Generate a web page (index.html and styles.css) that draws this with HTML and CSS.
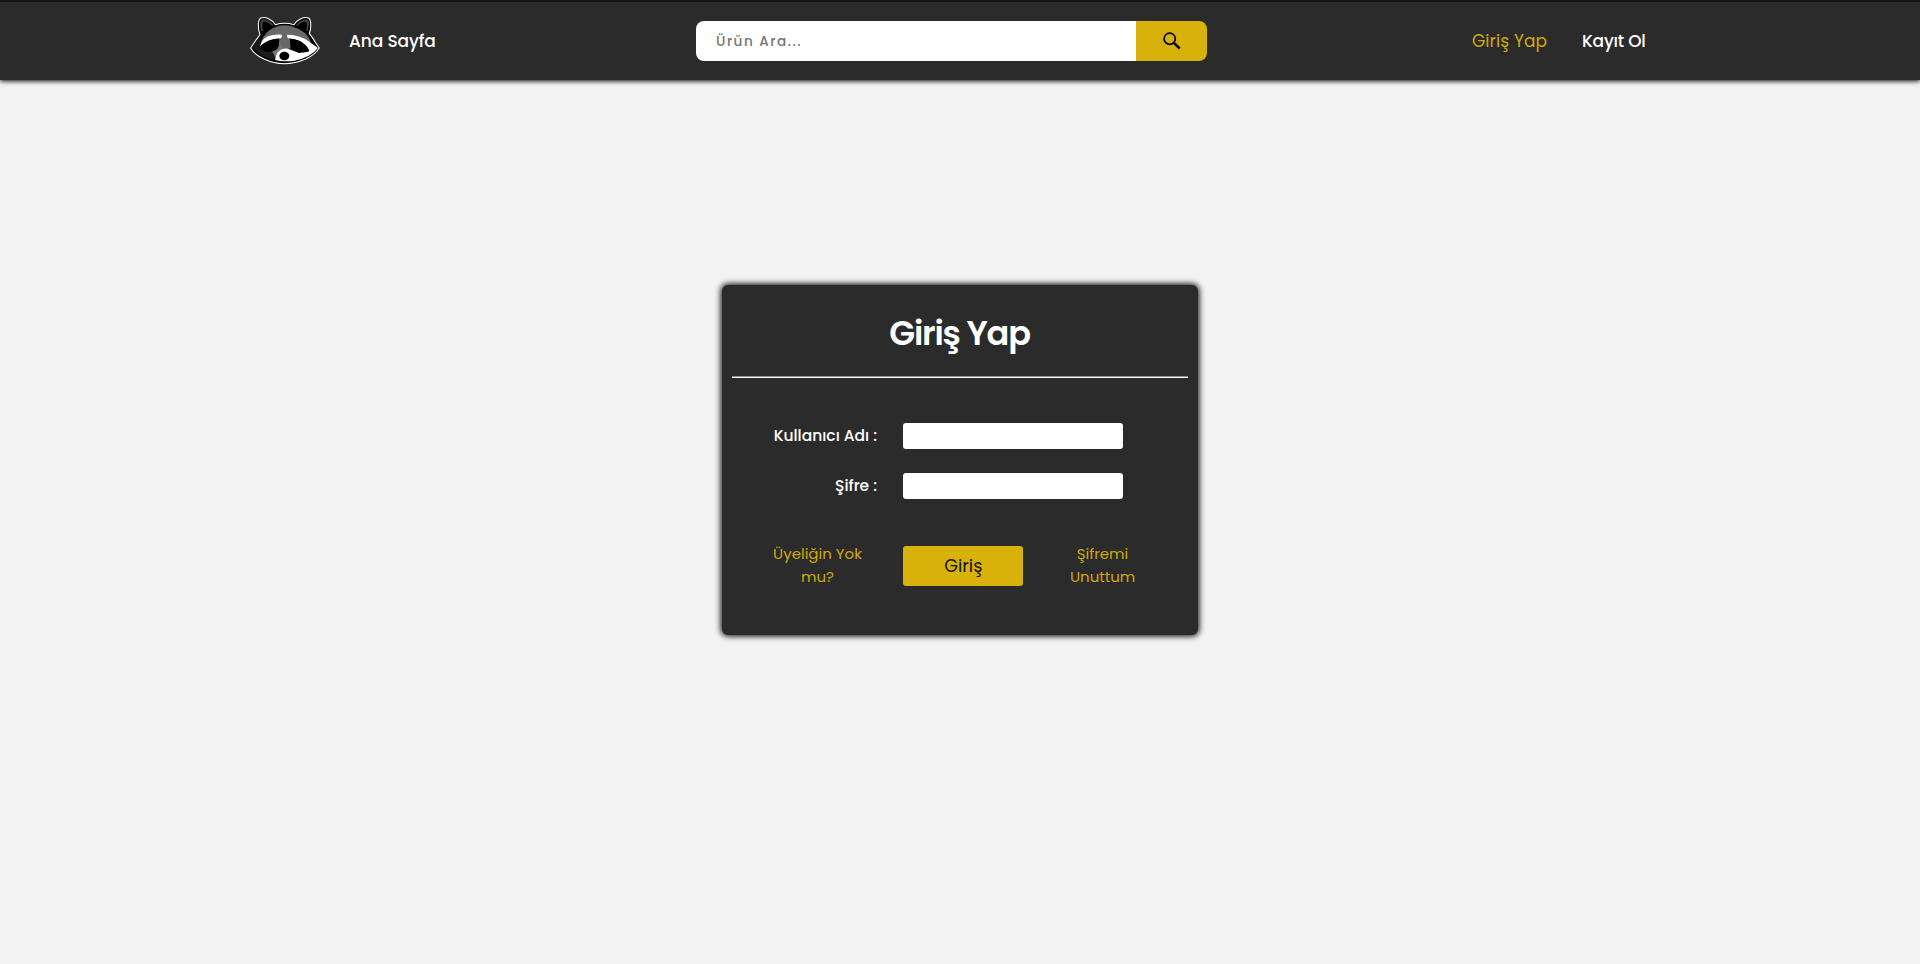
FILE: index.html
```html
<!DOCTYPE html>
<html lang="tr">
<head>
<meta charset="utf-8">
<title>Giriş Yap</title>
<link rel="stylesheet" href="styles.css">
</head>
<body>
<header class="header">
  <a class="logo" href="#">
    <svg width="72" height="50" viewBox="27 45 216 150">
      <path d="M60 101 C53 80 53 58 62 51 C78 46 98 57 106 71 Q133 63 162 71 C170 57 190 46 206 51 C214 58 214 80 208 98 Q220 112 226 124 L238 141 Q226 160 198 174 Q164 188 133 188 Q102 188 72 174 Q42 160 32 141 L46 120Z" fill="#000" stroke="#fff" stroke-width="3.2" stroke-linejoin="round"/>
      <path d="M65 92 C59 74 60 60 66 56 C80 54 94 63 100 73 L97 75 C86 64 75 60 69 62 C65 72 67 83 70 90Z M203 90 C208 74 208 60 202 56 C189 54 176 63 169 73 L172 75 C182 64 193 60 199 62 C203 72 201 83 198 88Z" fill="#444"/>
      <path d="M63 122 Q76 88 108 77 Q133 69 160 77 Q202 90 213 124 L180 114 L148 104 L152 142 L116 150 L118 104 L90 110Z" fill="#686868"/>
      <path d="M38 140 Q48 118 62 106 L62 134 L98 152 L104 178 Q60 166 38 140Z" fill="#1b1b1b"/>
      <path d="M60 134 Q66 114 84 106 Q106 98 125 101 Q127 108 123 112 Q108 112 92 118 Q72 124 60 136Z M142 101 Q176 100 206 121 L234 141 Q212 169 164 179 Q128 184 105 177 Q103 160 115 150 Q133 138 152 146 L177 156 L207 151 Q198 130 180 120 Q160 112 144 112 Q139 106 142 101Z" fill="#fff"/>
      <path d="M61 143 Q77 116 102 115 Q117 118 116 132 Q106 152 82 153 Q68 150 61 143Z M153 119 Q165 110 184 123 Q204 136 208 149 Q198 157 177 153 Q151 145 153 119Z" fill="#000"/>
      <path d="M96 152 Q112 147 117 134 L124 128 L128 143 Q109 149 106 177 Q104 160 96 152Z" fill="#777"/>
      <ellipse cx="133" cy="165" rx="15" ry="12.5" fill="#000"/>
    </svg>
  </a>
  <a class="nav-link home" href="#">Ana Sayfa</a>
  <form class="search">
    <input class="search-input" type="text" placeholder="Ürün Ara...">
    <button class="search-button" type="button" aria-label="Ara">
      <svg width="18" height="18" viewBox="0 0 18 18" fill="none" stroke="#000"><circle cx="6.7" cy="6.7" r="5.6" stroke-width="1.7"/><path d="M10.8 10.8 L16.7 16.5" stroke-width="2.5"/></svg>
    </button>
  </form>
  <nav class="account">
    <a class="nav-link signin" href="#">Giriş Yap</a>
    <a class="nav-link signup" href="#">Kayıt Ol</a>
  </nav>
</header>
<main class="card">
  <h1 class="title">Giriş Yap</h1>
  <div class="rule"></div>
  <form class="form">
    <label class="label user-label" for="user">Kullanıcı Adı :</label>
    <input class="field" id="user" type="text">
    <label class="label pass-label" for="pass">Şifre :</label>
    <input class="field" id="pass" type="password">
  </form>
  <div class="actions">
    <a class="link join" href="#">Üyeliğin Yok<br>mu?</a>
    <button class="submit" type="button">Giriş</button>
    <a class="link forgot" href="#">Şifremi<br>Unuttum</a>
  </div>
</main>
</body>
</html>
```
FILE: styles.css
```css
* { box-sizing: border-box; }
body {
  margin: 0;
  min-height: 964px;
  background: #f3f3f3;
  font-family: Poppins, Inter, "Open Sans", sans-serif;
}
a { text-decoration: none; }
.header {
  display: flex;
  align-items: center;
  height: 80px;
  padding-left: 249px;
  border-top: 2px solid #151515;
  background: #2b2b2b;
  box-shadow: 0 1px 5px #000;
}
.logo { width: 72px; height: 50px; }
.logo svg { display: block; }
.nav-link {
  font-size: 17px;
  font-weight: 500;
  line-height: 24px;
  color: #fff;
  white-space: nowrap;
}
.home { width: 98px; margin-left: 28px; letter-spacing: -0.1px; }
.search { display: flex; width: 511px; height: 40px; margin-left: 249px; }
.search-input {
  width: 440px;
  padding: 1px 20px 0;
  border: 0;
  border-radius: 8px 0 0 8px;
  background: #fff;
  font: 500 13.6px/20px Poppins, Inter, sans-serif;
  letter-spacing: 1.5px;
}
.search-input::placeholder { color: #757575; }
.search-button {
  display: flex;
  align-items: center;
  justify-content: center;
  width: 71px;
  padding: 0;
  border: 0;
  border-radius: 0 8px 8px 0;
  background: #d8b10b;
}
.account { display: flex; margin-left: 265px; }
.signin { width: 110px; color: #d0a90b; font-weight: 400; letter-spacing: 0.1px; }
.signup { letter-spacing: -0.2px; }
.card {
  width: 476px;
  height: 350px;
  margin: 205px auto 0;
  padding: 0 10px;
  border-radius: 6px;
  background: #2b2b2b;
  box-shadow: 0 0 6px 1px #000;
}
.title {
  margin: 0;
  padding-top: 24px;
  height: 91px;
  font-size: 33.6px;
  font-weight: 600;
  line-height: 50px;
  letter-spacing: -1.2px;
  text-indent: -1px;
  text-align: center;
  color: #fff;
}
.rule { height: 2px; border-top: 1px solid #8c8c8c; background: #fff; }
.form {
  display: grid;
  grid-template-columns: 145px 220px;
  column-gap: 26.3px;
  row-gap: 24px;
  padding-top: 45px;
}
.label {
  font-size: 15.5px;
  font-weight: 500;
  line-height: 26px;
  text-align: right;
  color: #fff;
  white-space: nowrap;
}
.field {
  width: 220px;
  height: 26px;
  border: 0;
  border-radius: 3px;
  background: #fff;
}
.actions {
  display: flex;
  align-items: center;
  padding: 0 0 0 41px;
  margin-top: 43px;
  height: 46px;
}
.link {
  font-size: 15px;
  line-height: 23px;
  text-align: center;
  color: #d0a90b;
  white-space: nowrap;
}
.join { width: 89px; }
.submit {
  width: 120px;
  height: 40px;
  margin: 2px 0 0 41.3px;
  border: 0;
  border-radius: 3px;
  background: #d8b10b;
  color: #111;
  font: 400 17.6px/24px Poppins, Inter, sans-serif;
}
.forgot { width: 65px; margin-left: 46.7px; }
```
